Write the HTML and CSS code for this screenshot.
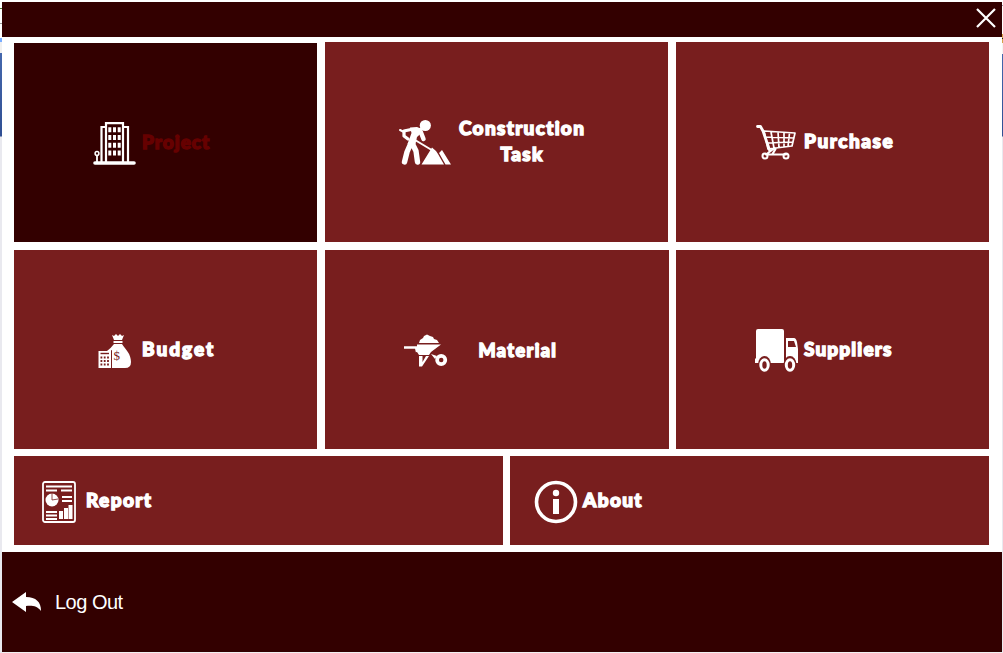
FILE: index.html
```
<!DOCTYPE html>
<html lang="en">
<head>
<meta charset="utf-8">
<title>Construction Manager</title>
<link rel="stylesheet" href="styles.css">
</head>
<body>
<div class="edge edge-left"></div>
<div class="window">
  <header class="titlebar">
    <svg class="close" width="20" height="20" viewBox="0 0 20 20"><path d="M1 1 19 19M19 1 1 19" stroke="#fff" stroke-width="2.2"/></svg>
  </header>
  <main class="content">
    <div class="row row-top">
      <div class="tile active project">
        <svg width="44" height="46" viewBox="0 0 44 46" fill="none" stroke="#fff">
          <path d="M2 42H41" stroke-width="3.6" stroke-linecap="round"/>
          <path d="M8.500 41V6H12M13 41V2.200H30V41M31 6H35V41" stroke-width="2.200"/>
          <path d="M16.800 6.300V34.500M21.500 6.300V34.500M26.200 6.300V34.500" stroke-width="3" stroke-dasharray="5 2.700"/>
          <circle cx="4" cy="32.500" r="1.900" stroke-width="1.500"/><path d="M4 34V41" stroke-width="1.800"/>
        </svg>
        <span class="label">Project</span>
      </div>
      <div class="tile task">
        <svg width="54" height="48" viewBox="0 0 54 48" fill="#fff">
          <circle cx="26.300" cy="6.500" r="5.600"/>
          <path d="M11 8.500 18 8Q22 9 23.500 13L18 18 16.500 25H8.500L12.500 14Z"/>
          <g fill="none" stroke="#fff" stroke-linecap="round" stroke-linejoin="round">
            <path d="M11.500 25 8 33 5.500 43M13 24 17 32 18.500 43" stroke-width="5.400"/>
            <path d="M21 11 24.500 20" stroke-width="4.500"/>
            <path d="M12 10.500 5 12 5 17 9 20" stroke-width="3.200"/>
            <path d="M1 11 5 13M16 21 36 33" stroke-width="2"/>
          </g>
          <path d="M22.500 45.500 33 28.500 37 32 39 35 45 45.500ZM40 34 43 31 52 45.500H46.500Z"/>
        </svg>
        <span class="label">Construction<br>Task</span>
      </div>
      <div class="tile purchase">
        <svg width="42" height="38" viewBox="0 0 42 38" fill="none" stroke="#fff" stroke-linecap="round" stroke-linejoin="round">
          <path d="M1.500 2.500H4.500L7 7 13.500 26" stroke-width="2.800"/>
          <path d="M8 7 39 9 36 22 12 25ZM9.500 13 38 14M11 19 37 18M15 8 18 24M22 8 23 23.500M28 8.500 28 23M33.500 9 32 22.500" stroke-width="1.700"/>
          <path d="M18.500 24 12 29M19.500 25 16.500 30M10 30.500H30" stroke-width="2.200"/>
          <circle cx="9" cy="32" r="2.500" stroke-width="2"/><circle cx="30" cy="32" r="2.500" stroke-width="2"/>
        </svg>
        <span class="label">Purchase</span>
      </div>
    </div>
    <div class="row row-middle">
      <div class="tile budget">
        <svg width="34" height="36" viewBox="0 0 34 36" fill="#fff">
          <path d="M14 2 16 3 18 1 20 3 22 1 24 3 26 2 24 7H16ZM15.500 8H24.500V10H15.500ZM16 11H24C28 17 33 21 33 29Q33 35 27 35H14V18H9Q13 15 16 11Z"/>
          <path d="M.5 18H13V35H.5Z"/>
          <path d="M2.500 20.500H11" stroke="#781e1e" stroke-width="1.400"/>
          <path d="M2.500 24.500H11.500M2.500 28H11.500M2.500 31.500H11.500" stroke="#781e1e" stroke-width="1.800" stroke-dasharray="1.800 1.500"/>
          <path d="M13.500 17V35" stroke="#781e1e" stroke-width=".8"/>
          <text class="dollar" x="15.500" y="27">$</text>
        </svg>
        <span class="label">Budget</span>
      </div>
      <div class="tile material">
        <svg width="44" height="34" viewBox="0 0 44 34" fill="#fff">
          <path d="M15 9 16 6 19 4 20 2 23 .5 26 2 29 3 30 5 33 6 35 9ZM13 10.500H37L27 18 25 21H15L13 18Z"/>
          <path d="M0 13.500H12L13 18" fill="none" stroke="#fff" stroke-width="2.400"/>
          <path d="M15 22H18.500V28L22 22H25L18 32.500H15ZM27 20 33 22 31 25Z"/>
          <circle cx="37.200" cy="26" r="4.100" fill="none" stroke="#fff" stroke-width="3.700"/>
        </svg>
        <span class="label">Material</span>
      </div>
      <div class="tile suppliers">
        <svg width="44" height="44" viewBox="0 0 44 44" fill="#fff">
          <path d="M1 30V3Q1 1 3 1H27Q29 1 29 3V35H0V31Z"/>
          <path fill-rule="evenodd" d="M28 33H32V35H28ZM31 10H39Q41 10 42 14L43 21V35H31ZM33 13V19H41L39 13Z"/>
          <ellipse cx="9.500" cy="36.500" rx="6.500" ry="8.500" fill="#781e1e"/><ellipse cx="35" cy="36.500" rx="6.500" ry="8.500" fill="#781e1e"/>
          <g fill="none" stroke="#fff" stroke-width="3"><ellipse cx="9.500" cy="37" rx="3.700" ry="5.300"/><ellipse cx="35" cy="37" rx="3.700" ry="5.300"/></g>
        </svg>
        <span class="label">Suppliers</span>
      </div>
    </div>
    <div class="row row-bottom">
      <div class="tile report">
        <svg width="34" height="42" viewBox="0 0 34 42" fill="none" stroke="#fff">
          <rect x="1" y="1" width="32" height="40" rx="2" stroke-width="1.800"/>
          <path d="M4 5.500H30M4 9.500H15M19 9.500H30M20 16H30M20 20H30M4 31H15M4 34.500H15M4 38H15" stroke-width="1.900"/>
          <circle cx="10" cy="19" r="6.500" fill="#fff" stroke="none"/>
          <path d="M10 12V19L16 18" stroke="#781e1e" stroke-width=".8"/>
          <path d="M19 38V30M24 38V27M28.500 38V24" stroke-width="4"/>
        </svg>
        <span class="label">Report</span>
      </div>
      <div class="tile about">
        <svg width="44" height="44" viewBox="0 0 44 44" fill="#fff">
          <circle cx="22" cy="22" r="19.500" fill="none" stroke="#fff" stroke-width="3.600"/>
          <circle cx="22" cy="13" r="3.200"/><path d="M19 19H25V34H19Z"/>
        </svg>
        <span class="label">About</span>
      </div>
    </div>
  </main>
  <footer class="footer">
    <svg width="30" height="20" viewBox="0 0 30 20" fill="#fff"><path d="M0 10 14 0V5C24 5 29 10 29 19C25 14 21 13.500 14 14V20Z"/></svg>
    <span class="logout">Log Out</span>
  </footer>
</div>
<div class="edge edge-right"></div>
</body>
</html>
```
FILE: styles.css
```
* { box-sizing: border-box; }
body {
  margin: 0;
  width: 1003px;
  height: 653px;
  display: flex;
  overflow: hidden;
  background: #f0f0f3;
}
svg { display: block; flex: none; }
.window {
  width: 1000px;
  height: 653px;
  flex: none;
  border-top: 2px solid #fff;
  border-bottom: 1px solid #f0f0f0;
  background: #fff;
}
.edge { flex: none; height: 653px; }
.edge-left {
  width: 2px;
  background: linear-gradient(#fff 0 8px, #4e7935 8px 9px, #fff 9px 23px, #999 23px 24px, #fff 24px 38px, #78acff 38px 42px, #f0f0f0 42px 53px, #4568ad 53px, #304f93 136px, #e9e9ef 137px);
}
.edge-right {
  width: 1px;
  background: linear-gradient(#fff 0 5px, #99a 5px 6px, #fff 6px 34px, #d5a146 34px 38px, #222 38px 39px, #d5a146 39px 43px, #f5f5f5 43px 54px, #4568ad 54px, #304f93 136px, #e9e9ef 137px);
}
.titlebar {
  height: 35px;
  padding: 6px 6px 0 0;
  display: flex;
  justify-content: flex-end;
  background: #330000;
}
.content {
  height: 515px;
  padding: 5px 13px 7px 12px;
  display: flex;
  flex-direction: column;
}
.row { display: grid; }
.row-top { height: 200px; grid-template-columns: 303px 343px 313px; gap: 8px; margin-bottom: 8px; }
.row-middle { height: 199px; grid-template-columns: 303px 344px 313px; column-gap: 7.5px; margin-bottom: 7px; }
.row-bottom { height: 89px; grid-template-columns: 489px 479px; gap: 7px; }
.tile {
  display: flex;
  align-items: flex-start;
  background: #781e1e;
  color: #fff;
}
.active { background: #330000; color: #660000; margin-top: 1px; }
.label {
  font: 900 19px/26px Lato, sans-serif;
  -webkit-text-stroke: 1.4px currentColor;
  white-space: nowrap;
}
.project { padding: 78px 0 0 79px; }
.project .label { margin: 8px 0 0 5px; letter-spacing: 1px; }
.task { padding: 77px 0 0 74px; }
.task .label { margin: -4px 0 0 6px; text-align: center; letter-spacing: 1.3px; }
.purchase { padding: 82px 0 0 80px; }
.purchase .label { margin: 4px 0 0 6px; letter-spacing: 1.55px; }
.budget { padding: 83px 0 0 84px; }
.budget .label { margin: 3px 0 0 10px; letter-spacing: 2px; }
.material { padding: 84px 0 0 79px; }
.material .label { margin: 3px 0 0 31px; font-size: 18px; letter-spacing: 1.4px; }
.suppliers { padding: 78px 0 0 79px; }
.suppliers .label { margin: 8px 0 0 5px; letter-spacing: 1.15px; }
.report { padding: 25px 0 0 28px; }
.report .label { margin: 6px 0 0 10px; letter-spacing: 1.4px; }
.about { padding: 24px 0 0 24px; }
.about .label { margin: 7px 0 0 5px; letter-spacing: 1.35px; }
.dollar { font: 13px "Liberation Serif", serif; fill: #781e1e; }
.footer {
  height: 100px;
  padding-left: 10px;
  display: flex;
  align-items: center;
  gap: 13px;
  background: #330000;
}
.logout { font: 20px/24px "Liberation Sans", Arial, sans-serif; color: #fff; letter-spacing: -.5px; }
```
